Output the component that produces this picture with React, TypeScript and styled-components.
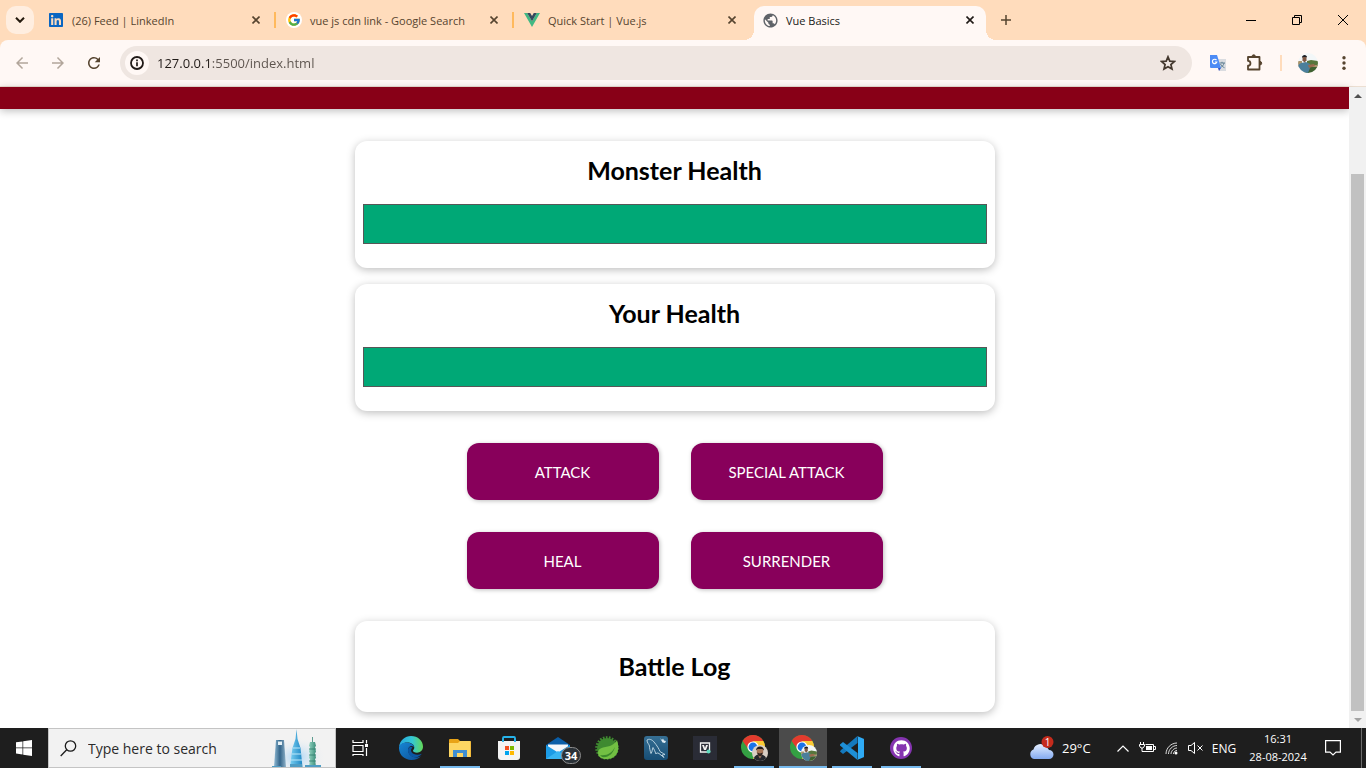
import React from 'react';
import styled, { createGlobalStyle, css } from 'styled-components';
import { FcGoogle } from 'react-icons/fc';
import { FaGithub, FaLinkedin } from 'react-icons/fa';
import { MdArrowBack, MdArrowForward, MdRefresh, MdPublic } from 'react-icons/md';

const GlobalStyle = createGlobalStyle`
  *, *::before, *::after { box-sizing: border-box; }
  html, body { margin: 0; background: #fff; }
  button, input { font: inherit; color: inherit; }
  button { border: 0; padding: 0; background: none; cursor: pointer; }
  svg { display: block; flex: none; }
`;

const uiFont = '"Open Sans", "Noto Sans", sans-serif';

const Screen = styled.div`
  display: flex;
  flex-direction: column;
  min-height: 100vh;
  font-family: ${uiFont};
  font-size: 11px;
`;

/* Tab strip */

const TabStrip = styled.header`
  display: flex;
  height: 40px;
  background: #ffdcbc;
  color: #56442f;
`;

const TabSearch = styled.button`
  display: grid;
  place-items: center;
  flex: none;
  width: 28px;
  height: 28px;
  margin: 6px 2px 0 6px;
  border-radius: 10px;
  background: #ffeee0;
  color: #241a0e;
`;

const Tabs = styled.nav`
  display: flex;
  flex: 0 1 952px;
  min-width: 0;
`;

const Tab = styled.div<{ $active?: boolean; $divided?: boolean }>`
  position: relative;
  display: flex;
  align-items: center;
  flex: 1 1 0;
  min-width: 0;
  padding: 0 10px 0 12px;
  ${(p) =>
    p.$divided &&
    css`
      &::after {
        content: '';
        position: absolute;
        right: -2px;
        top: 12px;
        width: 2px;
        height: 16px;
        background: #ffb95c;
      }
    `}
  ${(p) =>
    p.$active &&
    css`
      color: #201a17;
      &::before {
        content: '';
        position: absolute;
        inset: 6px 2px 0 4px;
        border-radius: 10px 10px 0 0;
        background: #fff8f5;
      }
      &::after {
        content: '';
        position: absolute;
        left: -6px;
        right: -8px;
        bottom: 0;
        height: 10px;
        background:
          radial-gradient(circle at 0 0, transparent 10px, #fff8f5 10px) left / 10px 10px no-repeat,
          radial-gradient(circle at 100% 0, transparent 10px, #fff8f5 10px) right / 10px 10px no-repeat;
      }
    `}
`;

const TabLink = styled.a`
  position: relative;
  z-index: 1;
  display: flex;
  align-items: center;
  gap: 8px;
  flex: 1;
  min-width: 0;
  color: inherit;
  text-decoration: none;
  white-space: nowrap;
  overflow: hidden;
`;

const Favicon = styled.span`
  display: grid;
  place-items: center;
  flex: none;
  width: 16px;
  height: 16px;
  border-radius: 8px;
`;

const WhiteFavicon = styled(Favicon)`
  background: #fff;
`;

const CloseTab = styled.button`
  position: relative;
  z-index: 1;
  display: grid;
  place-items: center;
  width: 16px;
  height: 16px;
`;

const NewTab = styled.button`
  display: grid;
  place-items: center;
  width: 28px;
  height: 40px;
  margin-left: 4px;
`;

const WindowControls = styled.div`
  display: flex;
  margin-left: auto;
  color: #000;
`;

const WindowButton = styled.button`
  display: grid;
  place-items: center;
  width: 46px;
  height: 40px;
`;

/* Toolbar */

const ToolbarBack = styled.div`
  background: #ffdcbc;
`;

const Toolbar = styled.div`
  display: flex;
  align-items: center;
  height: 47px;
  padding: 0 8px;
  border-radius: 8px 8px 0 0;
  border-bottom: 1px solid #ecdfd2;
  background: #fff8f5;
  color: #56442f;
`;

const ToolButton = styled.button<{ $faded?: boolean }>`
  display: grid;
  place-items: center;
  flex: none;
  width: 28px;
  height: 28px;
  margin-right: 8px;
  opacity: ${(p) => (p.$faded ? 0.45 : 1)};
`;

const AddressBar = styled.form`
  display: flex;
  align-items: center;
  flex: 1;
  min-width: 0;
  height: 34px;
  margin-left: 4px;
  padding: 0 16px 0 5px;
  border-radius: 17px;
  background: #efe6e1;
  gap: 8px;
`;

const SiteInfo = styled.button`
  display: grid;
  place-items: center;
  flex: none;
  width: 24px;
  height: 24px;
  border-radius: 12px;
  background: #fff8f5;
  color: #201a17;
`;

const AddressInput = styled.input`
  flex: 1;
  min-width: 0;
  height: 20px;
  border: 0;
  padding: 0;
  outline: 0;
  font-size: 13px;
  line-height: 20px;
  color: transparent;
  background: linear-gradient(90deg, #201a17 54px, #5c534d 54px);
  background-clip: text;
  -webkit-background-clip: text;
`;

const StarButton = styled.button`
  color: #43382e;
`;

const Extensions = styled.div`
  display: flex;
  align-items: center;
  margin-left: 12px;
`;

const ExtButton = styled.button`
  display: grid;
  place-items: center;
  width: 28px;
  height: 28px;
  margin-right: 8px;
  &:last-child { margin-right: 0; }
`;

const ExtDivider = styled.span`
  width: 2px;
  height: 16px;
  margin: 0 12px 0 4px;
  background: #ffdcbc;
`;

/* Page */

const Viewport = styled.div`
  display: flex;
  flex: 1;
`;

const Page = styled.div`
  flex: 1;
  min-width: 0;
  font-family: Lato, "Open Sans", sans-serif;
  font-size: 15px;
  color: #000;
`;

const PageHeader = styled.div`
  height: 22px;
  background: #880017;
  box-shadow: 0 2px 8px rgba(0, 0, 0, 0.26);
`;

const Game = styled.main`
  max-width: 640px;
  margin: 32px auto 16px;
`;

const Card = styled.section<{ $log?: boolean }>`
  margin-bottom: 16px;
  padding: ${(p) => (p.$log ? '28px 8px' : '12px 8px 24px')};
  border-radius: 12px;
  text-align: center;
  box-shadow: 0 2px 8px rgba(0, 0, 0, 0.26);
`;

const Title = styled.h2`
  margin: 0;
  font-size: 25px;
  font-weight: 700;
  line-height: 35px;
`;

const HealthBar = styled.div`
  height: 40px;
  margin-top: 16px;
  border: 1px solid #575757;
  background: #fff;
`;

const HealthValue = styled.div`
  width: 100%;
  height: 100%;
  background: #00a876;
`;

const Controls = styled.section`
  display: flex;
  flex-wrap: wrap;
  justify-content: center;
  gap: 32px;
  margin: 32px 0;
  padding: 0 64px;
`;

const ActionButton = styled.button`
  width: 192px;
  height: 57px;
  border-radius: 12px;
  background: #88005b;
  color: #fff;
  box-shadow: 1px 1px 4px rgba(0, 0, 0, 0.26);
`;

const ScrollBar = styled.div`
  display: flex;
  flex-direction: column;
  width: 17px;
  background: #f1f1f1;
`;

const ScrollArrow = styled.button`
  display: grid;
  place-items: center;
  height: 17px;
`;

const ScrollSpace = styled.div`
  flex: 13 1 0;
`;

const ScrollThumb = styled.div`
  flex: 100 1 0;
  margin: 0 2px;
  background: #c1c1c1;
`;

/* Taskbar */

const Taskbar = styled.footer`
  display: flex;
  height: 40px;
  background: #1e1e1e;
  color: #fff;
`;

const StartButton = styled.button`
  display: grid;
  place-items: center;
  width: 48px;
`;

const SearchBox = styled.label`
  display: flex;
  align-items: center;
  flex: 0 1 288px;
  min-width: 0;
  padding: 0 4px 0 11px;
  border: 1px solid #c4c4c4;
  background: #f2f2f2;
  color: #1b1b1b;
`;

const SearchInput = styled.input`
  flex: 1;
  min-width: 0;
  margin-left: 11px;
  border: 0;
  padding: 0;
  outline: 0;
  background: none;
  font-size: 14px;
  &::placeholder { color: #2b2b2b; opacity: 1; }
`;

const Apps = styled.nav`
  display: flex;
  gap: 1px;
  margin-left: 3px;
`;

const AppButton = styled.button<{ $open?: boolean; $active?: boolean }>`
  position: relative;
  display: grid;
  place-items: center;
  width: 48px;
  background: ${(p) => (p.$active ? '#4b4b4b' : 'none')};
  &::after {
    content: '';
    display: ${(p) => (p.$open || p.$active ? 'block' : 'none')};
    position: absolute;
    inset: auto ${(p) => (p.$active ? '0' : '4px')} 0;
    height: 2px;
    background: #76b9ed;
  }
`;

const CountBadge = styled.span`
  position: absolute;
  right: 1px;
  bottom: 4px;
  width: 20px;
  height: 17px;
  border: 1px solid #8c8c8c;
  border-radius: 9px;
  background: #2b3238;
  font-size: 11px;
  font-weight: 700;
  line-height: 15px;
  text-align: center;
`;

const Tray = styled.div`
  display: flex;
  align-items: stretch;
  margin-left: auto;
`;

const Weather = styled.button`
  display: flex;
  align-items: center;
  gap: 8px;
  width: 82px;
  font-size: 13px;
`;

const TrayButton = styled.button<{ $width?: number }>`
  display: grid;
  place-items: center;
  width: ${(p) => p.$width ?? 24}px;
  font-size: 12px;
`;

const Clock = styled(TrayButton)`
  align-content: center;
  font-size: 11px;
  line-height: 18px;
`;

const ShowDesktop = styled.button`
  width: 5px;
  margin-left: 10px;
  border-left: 1px solid #6b6b6b;
`;

const Cross = () => (
  <svg width="8" height="8" viewBox="0 0 8 8" stroke="currentColor" strokeWidth="1.6">
    <path d="M.5.5l7 7M7.5.5l-7 7" />
  </svg>
);

const InfoIcon = () => (
  <svg width="14" height="14" viewBox="0 0 14 14" fill="none" stroke="currentColor">
    <circle cx="7" cy="7" r="6" strokeWidth="1.800" />
    <path d="M7 6.300v4M7 3.600v1.600" strokeWidth="1.700" />
  </svg>
);

const StarIcon = () => (
  <svg width="16" height="16" viewBox="0 0 16 16" fill="none" stroke="currentColor" strokeWidth="1.700">
    <path d="M8 1.800l1.800 4.300 4.600.4-3.500 3 1.100 4.600L8 11.700l-4 2.400 1.100-4.600-3.500-3 4.600-.4z" />
  </svg>
);

const VueLogo = () => (
  <svg width="16" height="14" viewBox="0 0 16 14">
    <path d="M0 0h3.2L8 8.3 12.8 0H16L8 14z" fill="#42b883" />
    <path d="M3.2 0h3L8 3.1 9.8 0h3L8 8.3z" fill="#35495e" />
  </svg>
);

const TranslateLogo = () => (
  <svg width="16" height="16" viewBox="0 0 16 16">
    <path d="M6 4h10v12H9z" fill="#dadce0" />
    <path d="M9.500 8h5.500M12 6.800V8M14 8c-.4 2.400-2 3.800-3.600 4.500M10.500 9c.8 1.800 2.500 3 4 3.700" stroke="#5e7f91" strokeWidth="1" fill="none" />
    <path d="M8 13h3l-2 3z" fill="#3553c9" />
    <path d="M0 0h7l4 13H1a1 1 0 0 1-1-1z" fill="#4c8bf5" />
    <path d="M6.500 5.200A2.200 2.200 0 1 0 6.800 7H4.800" stroke="#fff" strokeWidth="1.200" fill="none" />
  </svg>
);

const Puzzle = () => (
  <svg width="18" height="18" viewBox="0 0 18 18" fill="none" stroke="currentColor" strokeWidth="1.800" strokeLinejoin="round">
    <path d="M3 3h11.500v12.500H3v-3.800a2.400 2.400 0 0 0 0-4.900z" />
    <path d="M7 2.500a1.700 1.700 0 0 1 3.400 0zM15 7.500a1.700 1.700 0 0 1 0 3.400z" fill="currentColor" strokeWidth="1" />
  </svg>
);

const Portrait = ({ x = 0, y = 0, id, dark = false }: { x?: number; y?: number; id: string; dark?: boolean }) => (
  <g transform={`translate(${x} ${y})`}>
    <clipPath id={id}><circle cx="10" cy="10" r="10" /></clipPath>
    <g clipPath={`url(#${id})`}>
      <path d="M0 0h20v20H0z" fill={dark ? '#d9cfc5' : '#f3f7f8'} />
      {dark ? (
        <>
          <path d="M2 20c0-6 3-8 8-8s8 2 8 8z" fill="#24262c" />
          <path d="M7 12h6l-3 5z" fill="#b48468" />
          <path d="M6 5h8v5l-4 4-4-4z" fill="#a87657" />
          <path d="M5 7c0-7 10-7 10 0l-2-2H7z" fill="#211a18" />
          <path d="M6.500 9.500l3.500 1 3.500-1-1 3.500-2.500 1.500-2.500-1.500z" fill="#352722" />
        </>
      ) : (
        <>
          <path d="M9 8l4-1 7 1v5H9z" fill="#57763c" />
          <path d="M0 8h4v6H0zM10 12h10v2H10z" fill="#a9946c" />
          <path d="M6 14h14v6H6z" fill="#3f6130" />
          <path d="M0 12l3-2 5-1 4 2v4l-2 5H0z" fill="#4b7f9b" />
          <path d="M10 12l6-1 1 2-6 2z" fill="#9b6a4f" />
          <path d="M4.500 3h4v4.500l-2 2-2-2z" fill="#7f5844" />
          <path d="M4 5c0-4 5-4 5-.5L8 4H5z" fill="#1c1f25" />
        </>
      )}
    </g>
  </g>
);

const ChromeLogo = ({ id, dark }: { id: string; dark?: boolean }) => (
  <svg width="27" height="27" viewBox="0 0 27 27">
    <circle cx="12" cy="12" r="12" fill="#34a043" />
    <path d="M1.600 6A12 12 0 0 1 22.400 6L12 7.500 7.700 14.500z" fill="#e33b2e" />
    <path d="M22.400 6A12 12 0 0 1 12 24l5-9.500L12 6z" fill="#fcc934" />
    <circle cx="12" cy="12" r="5.600" fill="#fff" />
    <circle cx="12" cy="12" r="4.400" fill="#1a73e8" />
    <g transform="translate(11 10) scale(.8)"><Portrait id={id} dark={dark} /></g>
  </svg>
);

const WindowsLogo = () => (
  <svg width="16" height="16" viewBox="0 0 16 16" fill="#fff">
    <path d="M0 2.300l6.500-.9v6.100H0zM7.200 1.300L16 0v7.500H7.200zM0 8.300h6.500v6.200L0 13.600zM7.200 8.300H16V16l-8.800-1.300z" />
  </svg>
);

const Skyline = () => (
  <svg width="64" height="38" viewBox="0 0 64 38">
    <defs>
      <radialGradient id="skyGlow"><stop offset="0" stopColor="#a9d4f5" /><stop offset="1" stopColor="#f2f2f2" stopOpacity="0" /></radialGradient>
      <linearGradient id="towerBlue" x1="0" x2="1"><stop offset="0" stopColor="#7ad0f2" /><stop offset="1" stopColor="#1d86c4" /></linearGradient>
      <linearGradient id="towerSteel" x1="0" x2="1"><stop offset="0" stopColor="#8fb9d3" /><stop offset=".5" stopColor="#33658a" /><stop offset="1" stopColor="#8eb1c8" /></linearGradient>
      <linearGradient id="towerGreen" x1="0" x2="1"><stop offset="0" stopColor="#8fd0bd" /><stop offset="1" stopColor="#3d8f7c" /></linearGradient>
    </defs>
    <ellipse cx="30" cy="28" rx="29" ry="20" fill="url(#skyGlow)" />
    <path d="M9 11h8l2 27H7z" fill="url(#towerSteel)" />
    <path d="M11 12.500h4v3.500h-4z" fill="#e4f0f6" />
    <path d="M29.500 0l1 10 3 9 2 19H23l2.500-19 3-9z" fill="url(#towerBlue)" />
    <path d="M26 19h7M25 25h9M24 31h11" stroke="#bde8f9" />
    <path d="M45.500 8v5" stroke="#5d9c90" />
    <path d="M43 13h5l1 4-1 1 1 5-1 1 1 5-1 1 1 8h-7l1-8-1-1 1-5-1-1 1-5-1-1z" fill="url(#towerGreen)" />
    <path d="M42 20h7M42 26h7M42 32h7" stroke="#2f7b6c" strokeWidth=".8" />
    <path d="M5 37h9v1H5zM23 35h12v3H23zM38 36h16v2H38z" fill="#4f9dc4" />
  </svg>
);

const TaskView = () => (
  <svg width="17" height="16" viewBox="0 0 17 16" fill="none" stroke="#fff" strokeWidth="1.200">
    <path d="M1 0v2.500h10V0M1 5.500h10v6H1zM1 16v-1.500h10V16M14.500 0v3.500M14.500 8v8" />
    <path d="M13 4h3v3h-3z" fill="#fff" stroke="none" />
  </svg>
);

const EdgeLogo = () => (
  <svg width="24" height="24" viewBox="0 0 24 24">
    <defs>
      <linearGradient id="edgeTop" x1="0" x2="1"><stop offset="0" stopColor="#25a7e0" /><stop offset=".55" stopColor="#35c8d4" /><stop offset="1" stopColor="#63d957" /></linearGradient>
      <linearGradient id="edgeLow" x1="0" x2="1" y1="0" y2="1"><stop offset="0" stopColor="#1686d4" /><stop offset="1" stopColor="#0d4f98" /></linearGradient>
    </defs>
    <path d="M0 11C1 4 6 0 12 0c7 0 12 5 12 10.500 0 4-3 6.200-6 6.200-2.500 0-4-1-4-1.900s1.300-1.200 1.300-3.300C15.300 8.500 12 6.500 8 6.500S1 9 0 11z" fill="url(#edgeTop)" />
    <path d="M0 11c1-3 4.500-4.700 8-4.500 4 .2 7 2.300 7.200 4.500C12 8.500 9 11 9 14c0 4 4 7.500 9 7.500 1.500 0 3-.8 4-1.500-2 2.500-5.500 4-9.500 4C5 24-.5 18.500 0 11z" fill="url(#edgeLow)" />
    <path d="M9 14c-.3 5 5 8.500 9.500 7 2-.6 3.500-2 4.200-3.200-3.500 1.700-8.500 1-10.200-1.800-1-1.700-.3-3.500 1-4.600C11.500 10 9.200 11.500 9 14z" fill="#0b57a4" />
  </svg>
);

const FolderIcon = () => (
  <svg width="22" height="18" viewBox="0 0 22 18">
    <path d="M0 1a1 1 0 0 1 1-1h8l2 2h10a1 1 0 0 1 1 1v15H0z" fill="#e8a317" />
    <path d="M0 4h9l2-2h10.500v16H0z" fill="#fdd663" />
    <path d="M4 18v-7h14v7h-4v-4H8v4z" fill="#3f8fd2" />
  </svg>
);

const StoreIcon = () => (
  <svg width="24" height="24" viewBox="0 0 24 24">
    <path d="M6 7V2a1 1 0 0 1 1-1h10a1 1 0 0 1 1 1v5" fill="none" stroke="#26b3ea" strokeWidth="1.800" />
    <path d="M1 5h22v16a3 3 0 0 1-3 3H4a3 3 0 0 1-3-3z" fill="#f4f4f4" />
    <path d="M6 6V2.500M18 6V2.500" stroke="#26b3ea" strokeWidth="1.800" />
    <path d="M8 10h4v4H8z" fill="#f25022" /><path d="M13 10h4v4h-4z" fill="#7fba00" />
    <path d="M8 15h4v4H8z" fill="#00a4ef" /><path d="M13 15h4v4h-4z" fill="#ffb900" />
  </svg>
);

const MailIcon = () => (
  <svg width="24" height="22" viewBox="0 0 24 22">
    <path d="M0 8l12-8 12 8v3H0z" fill="#0a5ea8" />
    <path d="M2 7.500h20V16H2z" fill="#f4f7fa" />
    <path d="M0 8l12 7.500L24 8v14H0z" fill="#1c9be6" />
    <path d="M0 22l12-8 12 8z" fill="#38b4f2" />
  </svg>
);

const SpringIcon = () => (
  <svg width="24" height="24" viewBox="0 0 24 24">
    <circle cx="12" cy="12" r="10" fill="#3f8a30" />
    <circle cx="12" cy="12" r="10.500" fill="none" stroke="#3f8a30" strokeWidth="2.600" strokeDasharray="1.700 1.300" />
    <path d="M22 4c3 9 1 18-9 19-6 .5-10-2-10-6 0-7 9-5 14-8 2-1.300 4-3 5-5z" fill="#72c043" />
    <path d="M5 19c7 1 12-2 15-8-2 7-7 11-13 10z" fill="#3c8a2c" />
  </svg>
);

const MysqlIcon = () => (
  <svg width="24" height="24" viewBox="0 0 24 24">
    <defs><linearGradient id="sqlTile" x2="0" y2="1"><stop offset="0" stopColor="#366f94" /><stop offset="1" stopColor="#174e75" /></linearGradient></defs>
    <rect width="24" height="24" rx="3" fill="url(#sqlTile)" />
    <path d="M3 4c2-1.500 5-.5 7 2 3 3.500 5 7 6 9.500 1 1 3 1.500 5 3l-3 .5 2 2.500-5-4c-2-1-2.500-.5-3 .5-1-2.500-2-5-3-6.500-1 2-.5 4-2 6-1-3-1.500-5-1.500-7.500C5 8 3 7 3 4z" fill="none" stroke="#c6dbe7" strokeWidth=".9" />
    <path d="M16 2l2 2 1-1.500 1 2 2 .5-1 2-2.500-.5z" fill="#dfecf3" />
  </svg>
);

const NoteIcon = () => (
  <svg width="24" height="24" viewBox="0 0 24 24">
    <path d="M0 0h24v24H0z" fill="#2a2c36" />
    <path d="M7.500 7h9v9h-9z" fill="none" stroke="#f2f2f2" strokeWidth="1.300" />
    <path d="M9 9h2l1 3 1-3h2l-2 5h-2z" fill="#f2f2f2" />
    <circle cx="15.500" cy="15.500" r="2" fill="#62dcc0" />
  </svg>
);

const CodeIcon = () => (
  <svg width="24" height="24" viewBox="0 0 24 24">
    <path d="M17.500 0v7L3 18l-3-2.500L1 14z" fill="#1479bd" />
    <path d="M3 6l14.500 11v7L0 9.500 0 8.500z" fill="#1e8fd6" />
    <path d="M17 0l6 2.500a1 1 0 0 1 1 1v17a1 1 0 0 1-1 1L17 24c.7-.4 1-1 1-2V2c0-1-.3-1.600-1-2z" fill="#2fabf5" />
  </svg>
);

const GithubDesktop = styled.span`
  display: grid;
  place-items: center;
  width: 22px;
  height: 22px;
  border-radius: 11px;
  background: #8534b0;
`;

const WeatherIcon = () => (
  <svg width="25" height="24" viewBox="0 0 25 24">
    <defs><linearGradient id="cloud" x2="0" y2="1"><stop offset="0" stopColor="#e4efff" /><stop offset="1" stopColor="#83aaf0" /></linearGradient></defs>
    <path d="M5 23a5 5 0 0 1-.5-9.500A7 7 0 0 1 17 11a6 6 0 0 1 3 3 4.500 4.500 0 0 1 0 9z" fill="url(#cloud)" />
    <circle cx="18.500" cy="6" r="6" fill="#c42b1c" />
    <text x="18.500" y="9.500" fontSize="10" fill="#fff" textAnchor="middle">1</text>
  </svg>
);

const BatteryIcon = () => (
  <svg width="17" height="12" viewBox="0 0 17 12" fill="none" stroke="#fff">
    <path d="M6.500 2.500h8v7h-9M14.500 4.500h2v3h-2" />
    <path d="M7 4h6v4H7z" fill="#fff" stroke="none" />
    <path d="M1.500 0v2M4.500 0v2M.5 2.500h5v1.500l-1.500 2H2l-1.500-2zM3 6v3.500h3" />
  </svg>
);

const WifiIcon = () => (
  <svg width="13" height="13" viewBox="0 0 13 13" fill="none" stroke="#ddd">
    <path d="M1 12C1 6 6 1 12 1M3.500 12c0-4.500 4-8.500 8.500-8.500M6 12c0-3 3-6 6-6M8.500 12C8.500 10 10 8.500 12 8.500" />
    <circle cx="11" cy="11" r="1.500" fill="#fff" stroke="none" />
  </svg>
);

const SpeakerIcon = () => (
  <svg width="15" height="12" viewBox="0 0 15 12" fill="none" stroke="#fff">
    <path d="M.5 3.500H3L6.500.5v11L3 8.500H.5zM9.500 3.500l5 5M14.500 3.500l-5 5" />
  </svg>
);

const tabs = [
  { title: '(26) Feed | LinkedIn', icon: <Favicon><FaLinkedin size={16} color="#0a66c2" /></Favicon>, divided: true },
  { title: 'vue js cdn link - Google Search', icon: <WhiteFavicon><FcGoogle size={14} /></WhiteFavicon>, divided: true },
  { title: 'Quick Start | Vue.js', icon: <Favicon><VueLogo /></Favicon> },
  { title: 'Vue Basics', icon: <Favicon><MdPublic size={17} color="#5f6368" /></Favicon>, active: true },
];

const apps = [
  { name: 'Microsoft Edge', icon: <EdgeLogo /> },
  { name: 'File Explorer', icon: <FolderIcon />, open: true },
  { name: 'Microsoft Store', icon: <StoreIcon /> },
  { name: 'Mail', icon: <MailIcon />, count: 34 },
  { name: 'Spring Tools', icon: <SpringIcon /> },
  { name: 'MySQL Workbench', icon: <MysqlIcon /> },
  { name: 'Notes', icon: <NoteIcon /> },
  { name: 'Chrome, first profile', icon: <ChromeLogo id="profileA" dark />, open: true },
  { name: 'Chrome, second profile', icon: <ChromeLogo id="profileB" />, active: true },
  { name: 'Visual Studio Code', icon: <CodeIcon />, open: true },
  { name: 'GitHub Desktop', icon: <GithubDesktop><FaGithub size={17} /></GithubDesktop>, open: true },
];

export default function App() {
  return (
    <Screen>
      <GlobalStyle />
      <TabStrip>
        <TabSearch aria-label="Search tabs">
          <svg width="10" height="6" viewBox="0 0 10 6" fill="none" stroke="currentColor" strokeWidth="2"><path d="M1 .8l4 4 4-4" /></svg>
        </TabSearch>
        <Tabs>
          {tabs.map((t) => (
            <Tab key={t.title} $active={t.active} $divided={t.divided}>
              <TabLink href="#">{t.icon}{t.title}</TabLink>
              <CloseTab aria-label={`Close ${t.title}`}><Cross /></CloseTab>
            </Tab>
          ))}
        </Tabs>
        <NewTab aria-label="New tab">
          <svg width="10" height="10" viewBox="0 0 10 10" stroke="currentColor" strokeWidth="1.500"><path d="M5 0v10M0 5h10" /></svg>
        </NewTab>
        <WindowControls>
          <WindowButton aria-label="Minimize">
            <svg width="10" height="10" viewBox="0 0 10 10" stroke="currentColor"><path d="M0 5.500h10" /></svg>
          </WindowButton>
          <WindowButton aria-label="Restore">
            <svg width="10" height="10" viewBox="0 0 10 10" stroke="currentColor" fill="none"><path d="M.5 2.500h7v7h-7zM2.500 2.500v-2h7v7h-2" /></svg>
          </WindowButton>
          <WindowButton aria-label="Close window">
            <svg width="10" height="10" viewBox="0 0 10 10" stroke="currentColor"><path d="M0 0l10 10M10 0L0 10" /></svg>
          </WindowButton>
        </WindowControls>
      </TabStrip>

      <ToolbarBack>
        <Toolbar>
          <ToolButton $faded aria-label="Back"><MdArrowBack size={18} /></ToolButton>
          <ToolButton $faded aria-label="Forward"><MdArrowForward size={18} /></ToolButton>
          <ToolButton aria-label="Reload"><MdRefresh size={18} /></ToolButton>
          <AddressBar onSubmit={(e) => e.preventDefault()}>
            <SiteInfo type="button" aria-label="Site information"><InfoIcon /></SiteInfo>
            <AddressInput aria-label="Address" defaultValue="127.0.0.1:5500/index.html" />
            <StarButton type="button" aria-label="Bookmark"><StarIcon /></StarButton>
          </AddressBar>
          <Extensions>
            <ExtButton aria-label="Google Translate"><TranslateLogo /></ExtButton>
            <ExtButton aria-label="Extensions"><Puzzle /></ExtButton>
            <ExtDivider />
            <ExtButton aria-label="Profile">
              <svg width="20" height="20" viewBox="0 0 20 20"><Portrait id="profileBar" /></svg>
            </ExtButton>
            <ExtButton aria-label="Menu">
              <svg width="4" height="14" viewBox="0 0 4 14" fill="currentColor"><circle cx="2" cy="1.800" r="1.700" /><circle cx="2" cy="7" r="1.700" /><circle cx="2" cy="12.200" r="1.700" /></svg>
            </ExtButton>
          </Extensions>
        </Toolbar>
      </ToolbarBack>

      <Viewport>
        <Page>
          <PageHeader />
          <Game>
            {['Monster Health', 'Your Health'].map((name) => (
              <Card key={name}>
                <Title>{name}</Title>
                <HealthBar><HealthValue /></HealthBar>
              </Card>
            ))}
            <Controls>
              {['ATTACK', 'SPECIAL ATTACK', 'HEAL', 'SURRENDER'].map((name) => (
                <ActionButton key={name}>{name}</ActionButton>
              ))}
            </Controls>
            <Card $log><Title>Battle Log</Title></Card>
          </Game>
        </Page>
        <ScrollBar>
          <ScrollArrow aria-label="Scroll up"><svg width="8" height="4" viewBox="0 0 8 4"><path d="M0 4l4-4 4 4z" fill="#505050" /></svg></ScrollArrow>
          <ScrollSpace />
          <ScrollThumb />
          <ScrollArrow aria-label="Scroll down"><svg width="8" height="4" viewBox="0 0 8 4"><path d="M0 0l4 4 4-4z" fill="#a3a3a3" /></svg></ScrollArrow>
        </ScrollBar>
      </Viewport>

      <Taskbar>
        <StartButton aria-label="Start"><WindowsLogo /></StartButton>
        <SearchBox>
          <svg width="17" height="17" viewBox="0 0 17 17" fill="none" stroke="currentColor" strokeWidth="1.300"><circle cx="10.500" cy="6" r="5.200" /><path d="M6.700 9.800L.7 16" /></svg>
          <SearchInput aria-label="Search" placeholder="Type here to search" />
          <Skyline />
        </SearchBox>
        <AppButton aria-label="Task view"><TaskView /></AppButton>
        <Apps>
          {apps.map((a) => (
            <AppButton key={a.name} aria-label={a.name} $open={a.open} $active={a.active}>
              {a.icon}
              {a.count && <CountBadge>{a.count}</CountBadge>}
            </AppButton>
          ))}
        </Apps>
        <Tray>
          <Weather><WeatherIcon />29°C</Weather>
          <TrayButton aria-label="Hidden icons">
            <svg width="12" height="7" viewBox="0 0 12 7" fill="none" stroke="#fff" strokeWidth="1.200"><path d="M.5 6.500L6 1l5.500 5.500" /></svg>
          </TrayButton>
          <TrayButton aria-label="Battery"><BatteryIcon /></TrayButton>
          <TrayButton aria-label="Network"><WifiIcon /></TrayButton>
          <TrayButton aria-label="Volume"><SpeakerIcon /></TrayButton>
          <TrayButton $width={34}>ENG</TrayButton>
          <Clock $width={74}><span>16:31</span><span>28-08-2024</span></Clock>
          <TrayButton $width={36} aria-label="Notifications">
            <svg width="16" height="16" viewBox="0 0 16 16" fill="none" stroke="#fff" strokeWidth="1.200"><path d="M.6.600h14.800v11.500H11L8 15l-3-2.900H.6z" /></svg>
          </TrayButton>
          <ShowDesktop aria-label="Show desktop" />
        </Tray>
      </Taskbar>
    </Screen>
  );
}
